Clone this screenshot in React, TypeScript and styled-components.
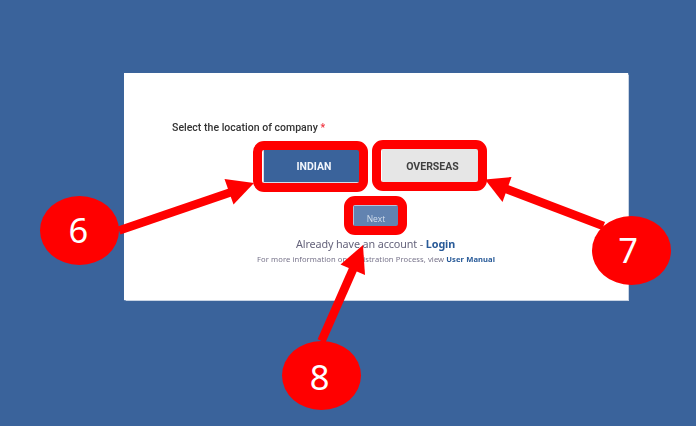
import React from 'react';
import styled, { createGlobalStyle } from 'styled-components';

const GlobalStyle = createGlobalStyle`
  * { box-sizing: border-box; }
  body { margin: 0; background: #3a639b; }
`;

const Page = styled.main`
  position: relative;
  display: flex;
  width: 696px;
  height: 426px;
  padding: 73px 68px 126px 124px;
  overflow: hidden;
  background: #3a639b;
`;

const Card = styled.section`
  display: flex;
  flex-direction: column;
  width: 504px;
  height: 227px;
  padding-top: 47px;
  background: #fff;
  box-shadow: 0 0 1px 0.5px #c9d4e4;
`;

const Label = styled.label`
  margin-left: 48px;
  height: 16px;
  font: 500 10.5px/16px Roboto, sans-serif;
  letter-spacing: 0.02px;
  color: #333;
  white-space: nowrap;
  filter: blur(0.4px);
`;

const Required = styled.span`
  color: #f0303c;
`;

const Choices = styled.div`
  display: flex;
  gap: 22px;
  margin: 13px 0 0 139px;
`;

const Choice = styled.button<{ $selected?: boolean }>`
  width: 97px;
  height: 34px;
  margin: 0;
  padding: ${(p) => (p.$selected ? '2px 0 0 5px' : '2px 0 0 4px')};
  border: 1px solid ${(p) => (p.$selected ? '#d5dce8' : '#e6e6e6')};
  background: ${(p) => (p.$selected ? '#3a639b' : '#e6e6e6')};
  color: ${(p) => (p.$selected ? '#f2f6fc' : '#404040')};
  font: 700 10.5px/30px Roboto, sans-serif;

  span { filter: blur(0.4px); display: inline-block; }
`;

const NextButton = styled.button`
  width: 46px;
  height: 22px;
  margin: 22px 0 0 229px;
  padding: 5px 0 0;
  border: 1px solid #b5c3d8;
  background: #6283b0;
  color: #d3deec;
  font: 400 8.5px/14px "Open Sans", sans-serif;

  span { filter: blur(0.4px); display: inline-block; }
`;

const Note = styled.p<{ $small?: boolean }>`
  margin: ${(p) => (p.$small ? '0 0 0 133px' : '8px 0 0 172px')};
  height: ${(p) => (p.$small ? 14 : 17)}px;
  font: 400 ${(p) => (p.$small ? '7.6px/14px' : '10.8px/17px')} "Noto Sans", sans-serif;
  letter-spacing: ${(p) => (p.$small ? 0.09 : -0.12)}px;
  color: ${(p) => (p.$small ? '#77738a' : '#66647c')};
  white-space: nowrap;
  filter: blur(0.4px);
`;

const Link = styled.a`
  font-weight: 700;
  color: #285a98;
`;

const Highlight = styled.div<{ $x: number; $y: number; $w: number; $h: number }>`
  position: absolute;
  left: ${(p) => p.$x}px;
  top: ${(p) => p.$y}px;
  width: ${(p) => p.$w}px;
  height: ${(p) => p.$h}px;
  border: 9px solid #f00;
  border-radius: 11px;
`;

const Arrows = styled.svg`
  position: absolute;
  inset: 0;
  pointer-events: none;
`;

const Marker = styled.div<{ $x: number; $y: number; $shiftX?: number; $shiftY?: number }>`
  position: absolute;
  left: ${(p) => p.$x}px;
  top: ${(p) => p.$y}px;
  width: 79px;
  height: 69.5px;
  padding-right: ${(p) => 3 + (p.$shiftX ?? 0)}px;
  border-radius: 50%;
  background: #f00;
  color: #fff;
  text-align: center;
  font: 400 34.5px/${(p) => 68 + (p.$shiftY ?? 0)}px "Noto Sans", sans-serif;
`;

export default function App() {
  return (
    <>
      <GlobalStyle />
      <Page>
        <Card>
          <Label>Select the location of company <Required>*</Required></Label>
          <Choices>
            <Choice $selected><span>INDIAN</span></Choice>
            <Choice><span>OVERSEAS</span></Choice>
          </Choices>
          <NextButton><span>Next</span></NextButton>
          <Note>Already have an account - <Link>Login</Link></Note>
          <Note $small>For more information on Registration Process, view <Link>User Manual</Link></Note>
        </Card>
        <Highlight $x={253} $y={141} $w={115} $h={51} />
        <Highlight $x={372} $y={140} $w={115} $h={51} />
        <Highlight $x={344} $y={196} $w={63} $h={39} />
        <Arrows width="696" height="426" viewBox="0 0 696 426">
          <g stroke="#f00" strokeWidth="8.6">
            <path d="M119 230.5L233 191.500" />
            <path d="M603.500 226L505 188.500" />
            <path d="M321.500 341L354 267" />
          </g>
          <g fill="#f00">
            <path d="M254 183L224.500 179L233.500 204.500Z" />
            <path d="M485 179.500L511.500 177L502.500 202Z" />
            <path d="M363 245L340.500 264.500L365 275Z" />
          </g>
        </Arrows>
        <Marker $x={40.4} $y={195.7}>6</Marker>
        <Marker $x={592} $y={215.7} $shiftX={4}>7</Marker>
        <Marker $x={281.7} $y={340.7} $shiftY={4}>8</Marker>
      </Page>
    </>
  );
}
